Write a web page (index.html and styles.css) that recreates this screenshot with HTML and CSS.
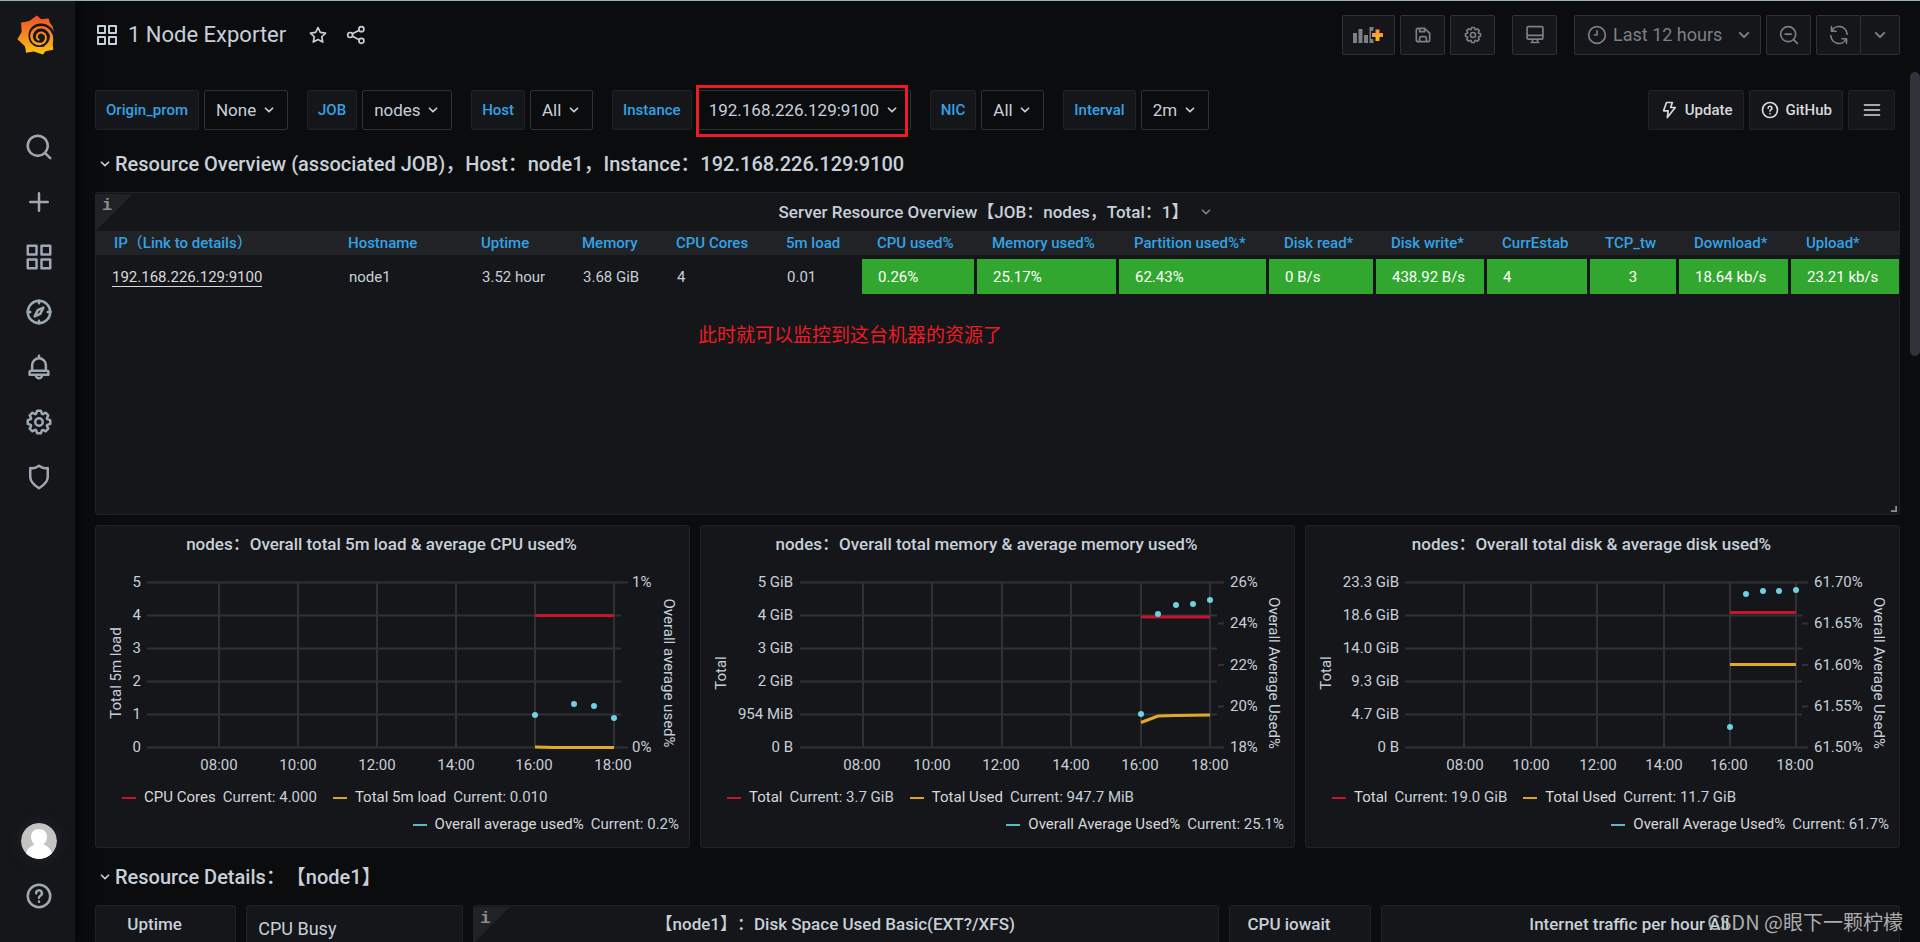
FILE: index.html
```html
<!DOCTYPE html>
<html lang="en">
<head>
<meta charset="utf-8">
<title>1 Node Exporter - Grafana</title>
<link rel="stylesheet" href="styles.css">
</head>
<body>
<svg class="defs" aria-hidden="true">
  <defs>
    <symbol id="i-apps" viewBox="0 0 24 24"><path fill="currentColor" d="M10,13H3a1,1,0,0,0-1,1v7a1,1,0,0,0,1,1h7a1,1,0,0,0,1-1V14A1,1,0,0,0,10,13ZM9,20H4V15H9ZM21,2H14a1,1,0,0,0-1,1v7a1,1,0,0,0,1,1h7a1,1,0,0,0,1-1V3A1,1,0,0,0,21,2ZM20,9H15V4h5Zm1,4H14a1,1,0,0,0-1,1v7a1,1,0,0,0,1,1h7a1,1,0,0,0,1-1V14A1,1,0,0,0,21,13Zm-1,7H15V15h5ZM10,2H3A1,1,0,0,0,2,3v7a1,1,0,0,0,1,1h7a1,1,0,0,0,1-1V3A1,1,0,0,0,10,2ZM9,9H4V4H9Z"/></symbol>
    <symbol id="i-search" viewBox="0 0 24 24"><path fill="currentColor" d="M21.71,20.29,18,16.61A9,9,0,1,0,16.61,18l3.68,3.68a1,1,0,0,0,1.42,0A1,1,0,0,0,21.71,20.29ZM11,18a7,7,0,1,1,7-7A7,7,0,0,1,11,18Z"/></symbol>
    <symbol id="i-cog" viewBox="0 0 24 24"><path fill="currentColor" d="M21.32,9.55l-1.89-.63.89-1.78A1,1,0,0,0,20.13,6L18,3.87a1,1,0,0,0-1.15-.19l-1.78.89-.63-1.89A1,1,0,0,0,13.5,2h-3a1,1,0,0,0-.95.68L8.92,4.57,7.14,3.68A1,1,0,0,0,6,3.87L3.87,6a1,1,0,0,0-.19,1.15l.89,1.78-1.89.63A1,1,0,0,0,2,10.5v3a1,1,0,0,0,.68.95l1.89.63-.89,1.78A1,1,0,0,0,3.87,18L6,20.13a1,1,0,0,0,1.15.19l1.78-.89.63,1.89a1,1,0,0,0,.95.68h3a1,1,0,0,0,.95-.68l.63-1.89,1.78.89A1,1,0,0,0,18,20.13L20.13,18a1,1,0,0,0,.19-1.15l-.89-1.78,1.89-.63A1,1,0,0,0,22,13.5v-3A1,1,0,0,0,21.32,9.55ZM20,12.78l-1.2.4A2,2,0,0,0,17.64,16l.57,1.14-1.1,1.1L16,17.64a2,2,0,0,0-2.79,1.16l-.4,1.2H11.22l-.4-1.2A2,2,0,0,0,8,17.64l-1.14.57-1.1-1.1L6.36,16A2,2,0,0,0,5.2,13.18L4,12.78V11.22l1.2-.4A2,2,0,0,0,6.36,8L5.79,6.89l1.1-1.1L8,6.36A2,2,0,0,0,10.82,5.2l.4-1.2h1.56l.4,1.2A2,2,0,0,0,16,6.36l1.14-.57,1.1,1.1L17.64,8a2,2,0,0,0,1.16,2.79l1.2.4ZM12,8a4,4,0,1,0,4,4A4,4,0,0,0,12,8Zm0,6a2,2,0,1,1,2-2A2,2,0,0,1,12,14Z"/></symbol>
    <symbol id="i-save" viewBox="0 0 24 24"><path fill="currentColor" d="M20.71,9.29l-6-6a1,1,0,0,0-.32-.21A1.09,1.09,0,0,0,14,3H6A3,3,0,0,0,3,6V18a3,3,0,0,0,3,3H18a3,3,0,0,0,3-3V10A1,1,0,0,0,20.71,9.29ZM9,5h4V7H9Zm6,14H9V16a1,1,0,0,1,1-1h4a1,1,0,0,1,1,1Zm4-1a1,1,0,0,1-1,1H17V16a3,3,0,0,0-3-3H10a3,3,0,0,0-3,3v3H6a1,1,0,0,1-1-1V6A1,1,0,0,1,6,5H7V8A1,1,0,0,0,8,9h6a1,1,0,0,0,1-1V6.41l4,4Z"/></symbol>
    <symbol id="i-down" viewBox="0 0 24 24"><path fill="currentColor" d="M17,9.17a1,1,0,0,0-1.41,0L12,12.71,8.46,9.17a1,1,0,0,0-1.41,0,1,1,0,0,0,0,1.42l4.24,4.24a1,1,0,0,0,1.42,0L17,10.59A1,1,0,0,0,17,9.17Z"/></symbol>
    <symbol id="i-help" viewBox="0 0 24 24"><g fill="none" stroke="currentColor" stroke-width="2" stroke-linecap="round"><circle cx="12" cy="12" r="9"/><path d="M9.7 9.8a2.3 2.3 0 1 1 3.4 2c-.8.4-1.1.8-1.1 1.5"/><path d="M12 16.4v.1"/></g></symbol>
  </defs>
</svg>
<div class="app">
  <nav class="sidebar" aria-label="Main menu">
    <a class="logo" href="#" aria-label="Grafana">
      <svg viewBox="50 44 110 118" width="37" height="40">
        <defs><linearGradient id="flame" gradientUnits="userSpaceOnUse" x1="105" y1="161" x2="105" y2="45"><stop offset="0" stop-color="#fcc70b"/><stop offset=".35" stop-color="#f79a1c"/><stop offset="1" stop-color="#f04e28"/></linearGradient></defs>
        <path fill="url(#flame)" d="M109 45L122 56Q134 55 144 54L148 67Q158 76 159 89Q160 98 158 105L156 129L158 147Q145 149 135 151L127 161Q113 156 100 152L77 156Q76 144 73 136L51 116Q58 104 64 94L62 66Q77 64 88 61Z"/>
        <path fill="#141619" d="M162 98C154 78 138 69 120 69C98 69 84 86 84 105C84 126 100 139 119 139C133 139 143 131 148 122L157 125L164 116Z"/>
        <path fill="none" stroke="url(#flame)" stroke-width="8" stroke-linecap="round" d="M153 123C157 100 142 80 121 80C105 80 93 92 93 107C94 121 104 130 118 130"/>
        <path fill="url(#flame)" d="M148 104L157 106L156 130L140 138L130 136C142 130 148 118 148 104Z"/>
        <path fill="none" stroke="url(#flame)" stroke-width="6" stroke-linecap="round" d="M118 130C130 129 137 120 136 108C134 97 122 93 114 98C107 103 107 113 114 117"/>
      </svg>
    </a>
    <ul class="menu">
      <li><a href="#" aria-label="Search"><svg class="ic30"><use href="#i-search"/></svg></a></li>
      <li><a href="#" aria-label="Create"><svg class="ic30" viewBox="0 0 24 24"><path class="ln" d="M12 5v14M5 12h14"/></svg></a></li>
      <li><a href="#" aria-label="Dashboards"><svg class="ic30"><use href="#i-apps"/></svg></a></li>
      <li><a href="#" aria-label="Explore"><svg class="ic30" viewBox="0 0 24 24"><circle class="ln" cx="12" cy="12" r="9"/><path class="ln" d="M12 3v2M12 19v2M3 12h2M19 12h2"/><path class="ln" d="M15.500 8.500L11 10.500L8.500 15.500L13 13.500Z"/></svg></a></li>
      <li><a href="#" aria-label="Alerting"><svg class="ic30" viewBox="0 0 24 24"><path class="ln" d="M12 3v2M6.500 15V10.500a5.500 5.500 0 0 1 11 0V15M5.500 15h13a1 1 0 0 1 1 1v2.200h-15V16a1 1 0 0 1 1-1ZM9.500 19q.6 2 2.500 2t2.500-2"/></svg></a></li>
      <li><a href="#" aria-label="Configuration"><svg class="ic30"><use href="#i-cog"/></svg></a></li>
      <li><a href="#" aria-label="Server admin"><svg class="ic30" viewBox="0 0 24 24"><path class="ln" d="M12 3C9.800 4.700 7.500 5.300 5 4.800V12c0 4 3 6.500 7 9c4-2.500 7-5 7-9V4.800C16.500 5.300 14.200 4.700 12 3Z"/></svg></a></li>
    </ul>
    <ul class="menu menu-bottom">
      <li><a href="#" aria-label="Profile"><svg class="avatar" viewBox="0 0 36 36"><circle cx="18" cy="18" r="18" fill="#c4c4c4"/><path fill="#fff" d="M18 6c5 0 8 3.500 8 8c0 3-1.500 6-3.500 7.500C27 23 30 26 31 30.500A18 18 0 0 1 5 30.500C6 26 9 23 13.500 21.500C11.500 20 10 17 10 14c0-4.500 3-8 8-8Z"/></svg></a></li>
      <li><a href="#" aria-label="Help"><svg class="ic30"><use href="#i-help"/></svg></a></li>
    </ul>
  </nav>

  <main class="main">
    <header class="toolbar">
      <svg class="ic24"><use href="#i-apps"/></svg>
      <h1>1 Node Exporter</h1>
      <button class="plain" aria-label="Mark as favorite"><svg class="ic20" viewBox="0 0 24 24"><path class="ln" d="M12 3l2.800 5.800l6.300.9l-4.600 4.400l1.200 6.400L12 17.400L6.300 20.500l1.200-6.400L2.900 9.700l6.300-.9Z"/></svg></button>
      <button class="plain" aria-label="Share dashboard"><svg class="ic20" viewBox="0 0 24 24"><circle class="ln" cx="5" cy="12" r="3"/><circle class="ln" cx="18.500" cy="5" r="3"/><circle class="ln" cx="18.500" cy="19" r="3"/><path class="ln" d="M7.700 10.600L15.800 6.400M7.700 13.400L15.800 17.600"/></svg></button>
      <div class="actions">
        <button class="tbtn tbtn-add" aria-label="Add panel"><svg width="32" height="20" viewBox="0 0 32 20"><path fill="#7b8087" d="M0 8h4v10H0ZM5.500 4h4v14h-4ZM11 10h4v8h-4ZM16.500 2h4v16h-4Z"/><path stroke="#141619" stroke-width="8" d="M24.500 4v12M18 10h12"/><path stroke="#ff9830" stroke-width="4" d="M24.500 4.500v6M19 10h11"/><path stroke="#fbb315" stroke-width="4" d="M24.500 10v6"/></svg></button>
        <button class="tbtn" aria-label="Save dashboard"><svg class="ic20"><use href="#i-save"/></svg></button>
        <button class="tbtn" aria-label="Dashboard settings"><svg class="ic20"><use href="#i-cog"/></svg></button>
        <button class="tbtn tbtn-view" aria-label="Cycle view mode"><svg class="ic20" viewBox="0 0 24 24"><path class="ln" d="M4 2h16a1.500 1.500 0 0 1 1.500 1.500v12A1.500 1.500 0 0 1 20 17H4a1.500 1.500 0 0 1-1.500-1.500v-12A1.500 1.500 0 0 1 4 2ZM2.500 12.500h19M9 17v3.500M15 17v3.500M7.500 21h9"/></svg></button>
        <button class="tbtn tbtn-time"><svg class="ic20" viewBox="0 0 24 24"><circle class="ln" cx="12" cy="12" r="10"/><path class="ln" d="M12 7v5H9"/></svg><span>Last 12 hours</span><svg class="ic24 end"><use href="#i-down"/></svg></button>
        <button class="tbtn" aria-label="Zoom out"><svg class="ic20" viewBox="0 0 24 24"><circle class="ln" cx="11" cy="11" r="9"/><path class="ln" d="M7.500 11h7M17.500 17.500L22 22"/></svg></button>
        <div class="split">
          <button class="tbtn" aria-label="Refresh"><svg class="ic20" viewBox="0 0 24 24"><path class="ln" d="M3 2v5.500h5.500M3.200 7.500A9.700 9.700 0 0 1 21.700 11M21 22v-5.500h-5.500M20.800 16.500A9.700 9.700 0 0 1 2.300 13"/></svg></button>
          <button class="tbtn tbtn-interval" aria-label="Refresh interval"><svg class="ic24"><use href="#i-down"/></svg></button>
        </div>
      </div>
    </header>

    <section class="vars" aria-label="Variables">
      <div class="var"><label for="v1">Origin_prom</label><span class="pick"><select id="v1"><option>None</option></select><svg class="ic20"><use href="#i-down"/></svg></span></div>
      <div class="var"><label for="v2">JOB</label><span class="pick"><select id="v2"><option>nodes</option></select><svg class="ic20"><use href="#i-down"/></svg></span></div>
      <div class="var"><label for="v3">Host</label><span class="pick"><select id="v3"><option>All</option></select><svg class="ic20"><use href="#i-down"/></svg></span></div>
      <div class="var"><label for="v4">Instance</label><span class="pick marked"><select id="v4"><option>192.168.226.129:9100</option></select><svg class="ic20"><use href="#i-down"/></svg></span></div>
      <div class="var"><label for="v5">NIC</label><span class="pick"><select id="v5"><option>All</option></select><svg class="ic20"><use href="#i-down"/></svg></span></div>
      <div class="var"><label for="v6">Interval</label><span class="pick"><select id="v6"><option>2m</option></select><svg class="ic20"><use href="#i-down"/></svg></span></div>
      <div class="links">
        <a href="#"><svg class="ic20" viewBox="0 0 24 24"><path class="ln" d="M9 3h7l-2 6h5.500L10 21l1-8H5.500Z"/></svg>Update</a>
        <a href="#"><svg class="ic20"><use href="#i-help"/></svg>GitHub</a>
        <a href="#" aria-label="Dashboards"><svg class="ic20" viewBox="0 0 24 24"><path class="ln" d="M3 6h18M3 12h18M3 18h18"/></svg></a>
      </div>
    </section>

    <h2 class="row-title"><svg class="ic20"><use href="#i-down"/></svg>Resource Overview (associated JOB)，Host：node1，Instance：192.168.226.129:9100</h2>

    <div class="grid">
      <section class="panel span24">
        <span class="info" aria-hidden="true">i</span>
        <h3>Server Resource Overview【JOB：nodes，Total：1】<svg class="ic20"><use href="#i-down"/></svg></h3>
        <table>
          <colgroup><col class="w237"><col class="w133"><col class="w101"><col class="w94"><col class="w110"><col class="w91"><col class="w115"><col class="w142"><col class="w150"><col class="w107"><col class="w111"><col class="w103"><col class="w89"><col class="w112"><col class="w109"></colgroup>
          <thead><tr><th>IP（Link to details）</th><th>Hostname</th><th>Uptime</th><th>Memory</th><th>CPU Cores</th><th>5m load</th><th>CPU used%</th><th>Memory used%</th><th>Partition used%*</th><th>Disk read*</th><th>Disk write*</th><th>CurrEstab</th><th>TCP_tw</th><th>Download*</th><th>Upload*</th></tr></thead>
          <tbody><tr><td><a href="#">192.168.226.129:9100</a></td><td>node1</td><td>3.52 hour</td><td>3.68 GiB</td><td>4</td><td>0.01</td><td class="ok">0.26%</td><td class="ok">25.17%</td><td class="ok">62.43%</td><td class="ok">0 B/s</td><td class="ok">438.92 B/s</td><td class="ok">4</td><td class="ok mid">3</td><td class="ok">18.64 kb/s</td><td class="ok">23.21 kb/s</td></tr></tbody>
        </table>
        <p class="note">此时就可以监控到这台机器的资源了</p>
        <svg class="grip" viewBox="0 0 8 8"><path d="M7 1v6H1" fill="none" stroke="#8e8e8e" stroke-width="2"/></svg>
      </section>

      <section class="panel span8">
        <h3 class="pad">nodes：Overall total 5m load &amp; average CPU used%</h3>
        <svg class="chart" viewBox="1 39 593 220">
          <path class="gl" d="M52 57.500H533M52 90.500H526M52 123.500H526M52 156.500H526M52 189.500H526M52 222.500H533M124 57V223M203 57V223M282 57V223M361 57V223M440 57V223M519 57V223"/>
          <g class="e"><text x="46" y="62">5</text><text x="46" y="95">4</text><text x="46" y="128">3</text><text x="46" y="161">2</text><text x="46" y="194">1</text><text x="46" y="227">0</text></g>
          <g><text x="537" y="62">1%</text><text x="537" y="227">0%</text></g>
          <g class="m"><text x="124" y="245">08:00</text><text x="203" y="245">10:00</text><text x="282" y="245">12:00</text><text x="361" y="245">14:00</text><text x="439" y="245">16:00</text><text x="518" y="245">18:00</text><text transform="translate(26 148) rotate(-90)">Total 5m load</text><text transform="translate(569 148) rotate(90)">Overall average used%</text></g>
          <path class="s red" d="M440 90.500H519"/><path class="s yellow" d="M440 222L460 222.500H519"/>
          <g class="dots"><circle cx="440" cy="190" r="3"/><circle cx="479" cy="179" r="3"/><circle cx="499" cy="181" r="3"/><circle cx="519" cy="193" r="3"/></g>
        </svg>
        <ul class="legend"><li class="red">CPU Cores<span>Current: 4.000</span></li><li class="yellow">Total 5m load<span>Current: 0.010</span></li><li class="cyan">Overall average used%<span>Current: 0.2%</span></li></ul>
      </section>

      <section class="panel span8">
        <h3 class="pad">nodes：Overall total memory &amp; average memory used%</h3>
        <svg class="chart" viewBox="1 39 593 220">
          <path class="gl" d="M100 57.500H524M100 90.500H517M100 123.500H517M100 156.500H517M100 189.500H517M100 222.500H524M163 57V223M232 57V223M302 57V223M371 57V223M441 57V223M510 57V223M518 98.500H524M518 140H524M518 181.500H524"/>
          <g class="e"><text x="93" y="62">5 GiB</text><text x="93" y="95">4 GiB</text><text x="93" y="128">3 GiB</text><text x="93" y="161">2 GiB</text><text x="93" y="194">954 MiB</text><text x="93" y="227">0 B</text></g>
          <g><text x="530" y="62">26%</text><text x="530" y="103">24%</text><text x="530" y="145">22%</text><text x="530" y="186">20%</text><text x="530" y="227">18%</text></g>
          <g class="m"><text x="162" y="245">08:00</text><text x="232" y="245">10:00</text><text x="301" y="245">12:00</text><text x="371" y="245">14:00</text><text x="440" y="245">16:00</text><text x="510" y="245">18:00</text><text transform="translate(26 148) rotate(-90)">Total</text><text transform="translate(569 148) rotate(90)">Overall Average Used%</text></g>
          <path class="s red" d="M441 92H510"/><path class="s yellow" d="M441 197.500L458 191L475 190.500L510 190"/>
          <g class="dots"><circle cx="441" cy="189" r="3"/><circle cx="458" cy="89" r="3"/><circle cx="476" cy="80" r="3"/><circle cx="493" cy="79" r="3"/><circle cx="510" cy="75" r="3"/></g>
        </svg>
        <ul class="legend"><li class="red">Total<span>Current: 3.7 GiB</span></li><li class="yellow">Total Used<span>Current: 947.7 MiB</span></li><li class="cyan">Overall Average Used%<span>Current: 25.1%</span></li></ul>
      </section>

      <section class="panel span8">
        <h3 class="pad">nodes：Overall total disk &amp; average disk used%</h3>
        <svg class="chart" viewBox="1 39 593 220">
          <path class="gl" d="M100 57.500H503M100 90.500H497M100 123.500H497M100 156.500H497M100 189.500H497M100 222.500H503M159 57V223M226 57V223M292 57V223M359 57V223M425 57V223M491 57V223M497 98.500H503M497 140H503M497 181.500H503"/>
          <g class="e"><text x="94" y="62">23.3 GiB</text><text x="94" y="95">18.6 GiB</text><text x="94" y="128">14.0 GiB</text><text x="94" y="161">9.3 GiB</text><text x="94" y="194">4.7 GiB</text><text x="94" y="227">0 B</text></g>
          <g><text x="509" y="62">61.70%</text><text x="509" y="103">61.65%</text><text x="509" y="145">61.60%</text><text x="509" y="186">61.55%</text><text x="509" y="227">61.50%</text></g>
          <g class="m"><text x="160" y="245">08:00</text><text x="226" y="245">10:00</text><text x="293" y="245">12:00</text><text x="359" y="245">14:00</text><text x="424" y="245">16:00</text><text x="490" y="245">18:00</text><text transform="translate(26 148) rotate(-90)">Total</text><text transform="translate(569 148) rotate(90)">Overall Average Used%</text></g>
          <path class="s red" d="M425 87.500H491"/><path class="s yellow" d="M425 139.500H491"/>
          <g class="dots"><circle cx="425" cy="202" r="3"/><circle cx="441" cy="69" r="3"/><circle cx="458" cy="66" r="3"/><circle cx="474" cy="66" r="3"/><circle cx="491" cy="65" r="3"/></g>
        </svg>
        <ul class="legend"><li class="red">Total<span>Current: 19.0 GiB</span></li><li class="yellow">Total Used<span>Current: 11.7 GiB</span></li><li class="cyan">Overall Average Used%<span>Current: 61.7%</span></li></ul>
      </section>
    </div>

    <h2 class="row-title"><svg class="ic20"><use href="#i-down"/></svg>Resource Details：【node1】</h2>

    <div class="grid">
      <section class="panel span2"><h3 class="pad">Uptime</h3></section>
      <section class="panel span3"><h3 class="gauge-title">CPU Busy</h3></section>
      <section class="panel span10"><span class="info" aria-hidden="true">i</span><h3 class="pad">【node1】：Disk Space Used Basic(EXT?/XFS)</h3></section>
      <section class="panel span2"><h3 class="pad">CPU iowait</h3></section>
      <section class="panel span7"><h3 class="pad">Internet traffic per hour All</h3></section>
    </div>
  </main>
  <div class="scroll-thumb"></div>
  <div class="watermark">CSDN @眼下一颗柠檬</div>
</div>
</body>
</html>
```
FILE: styles.css
```css
* { box-sizing: border-box; }

body {
  margin: 0;
  background: #0b0c0e;
  color: #c7d0d9;
  font: 15px/20px Roboto, "Noto Sans CJK SC", sans-serif;
  text-spacing-trim: space-all;
}

h1, h2, h3, p, ul { margin: 0; padding: 0; font-weight: 400; }
ul { list-style: none; }
a { color: inherit; text-decoration: none; }
svg { display: block; flex: none; }
button, select { font: inherit; color: inherit; margin: 0; }

.defs { position: absolute; width: 0; height: 0; }
.ic20 { width: 20px; height: 20px; }
.ic24 { width: 24px; height: 24px; }
.ic30 { width: 30px; height: 30px; }
.ln { fill: none; stroke: currentColor; stroke-width: 2; stroke-linejoin: round; stroke-linecap: round; }

.app {
  position: relative;
  display: flex;
  height: 100vh;
  overflow: hidden;
  border-top: 1px solid #9bb0b3;
}

/* Side menu */
.sidebar {
  flex: 0 0 75px;
  display: flex;
  flex-direction: column;
  background: #141619;
  color: #9fa7b3;
  box-shadow: 0 0 20px #000;
  padding: 14px 0 19px;
}
.logo { padding-left: 17px; margin-bottom: 64px; }
.menu a { display: flex; align-items: center; justify-content: center; height: 55px; padding-left: 3px; }
.menu-bottom { margin-top: auto; }
.avatar { width: 36px; height: 36px; border-radius: 50%; box-shadow: 0 0 14px #24262b; }

.main { flex: 1; min-width: 0; padding: 14px 20px 0; }

/* Dashboard toolbar */
.toolbar { display: flex; align-items: center; height: 40px; margin-bottom: 35px; }
.toolbar h1 { font-size: 22px; line-height: 28px; margin: 0 22px 0 9px; }
.plain { background: none; border: 0; padding: 0; margin-right: 18px; }
.actions { display: flex; gap: 5px; margin-left: auto; color: #7b8087; font-size: 18px; }
.tbtn {
  display: flex;
  align-items: center;
  justify-content: center;
  width: 45px;
  height: 40px;
  padding: 0;
  background: #141619;
  border: 1px solid #2c3235;
  border-radius: 2px;
}
.tbtn-add { width: 53px; }
.tbtn-view { margin: 0 12px; }
.tbtn-time { width: 187px; padding: 0 4px 0 12px; justify-content: flex-start; gap: 6px; }
.tbtn-time .end { margin-left: auto; }
.split { display: flex; }
.split .tbtn-interval { width: 40px; margin-left: -1px; }

/* Variables */
.vars { display: flex; align-items: center; gap: 19px; padding-right: 5px; margin-bottom: 5px; }
.var { display: flex; gap: 5px; }
.var label, .links a {
  display: flex;
  align-items: center;
  height: 40px;
  padding: 0 10px;
  background: #141619;
  border: 1px solid #202226;
  border-radius: 2px;
  font-weight: 500;
}
.var label { color: #33a2e5; }
.pick { position: relative; display: flex; }
.pick select {
  appearance: none;
  height: 40px;
  padding: 0 30px 0 11px;
  background: #0b0c0e;
  border: 1px solid #2c3235;
  border-radius: 2px;
  font-size: 17px;
}
.pick svg { position: absolute; right: 9px; top: 10px; pointer-events: none; }
.marked::after { content: ""; position: absolute; inset: -5px 3px -7px -1px; border: 3px solid #ed1c24; pointer-events: none; }
.links { display: flex; gap: 5px; margin-left: auto; color: #d8d9da; }
.links a { justify-content: center; gap: 6px; min-width: 47px; }

/* Rows and panels */
.row-title { display: flex; align-items: center; height: 57px; font-size: 20px; font-weight: 500; }
.grid { display: grid; grid-template-columns: repeat(24, minmax(0, 1fr)); gap: 10px; }
.panel {
  position: relative;
  height: 323px;
  background: #141619;
  border: 1px solid #202226;
  border-radius: 3px;
}
.span2 { grid-column: span 2; }
.span3 { grid-column: span 3; }
.span7 { grid-column: span 7; }
.span8 { grid-column: span 8; }
.span10 { grid-column: span 10; }
.span24 { grid-column: span 24; }
.panel h3 {
  display: flex;
  align-items: center;
  justify-content: center;
  height: 38px;
  font-size: 17px;
  font-weight: 500;
  white-space: nowrap;
}
.panel h3 svg { margin-left: 8px; color: #7b8087; }
.panel .pad { height: 36px; margin-bottom: 2px; padding-right: 22px; }
.panel .gauge-title { justify-content: flex-start; align-items: flex-end; height: 33px; padding-left: 11px; font-size: 18px; font-weight: 400; }

.info {
  position: absolute;
  left: 0;
  top: 1px;
  width: 36px;
  height: 36px;
  padding-left: 6px;
  background: linear-gradient(135deg, #202226 50%, transparent 50%);
  color: #8e8e8e;
  font: bold 17px/23px "Liberation Mono", monospace;
}

table { width: 100%; table-layout: fixed; border-collapse: separate; border-spacing: 0; }
th { height: 24px; padding: 0 0 0 18px; background: #202226; color: #33a2e5; font-weight: 500; text-align: left; white-space: nowrap; }
th + th { padding-left: 15px; }
td { height: 43px; padding: 0 0 0 16px; border: solid #141619; border-width: 4px 3px 4px 0; white-space: nowrap; }
td:last-child { border-right-width: 1px; }
td a { border-bottom: 1px solid #d8d9da; color: #d8d9da; }
.ok { background: #32a72f; color: #fff; }
.mid { padding: 0; text-align: center; }
.w237 { width: 237px; }
.w133 { width: 133px; }
.w101 { width: 101px; }
.w94 { width: 94px; }
.w110 { width: 110px; }
.w91 { width: 91px; }
.w115 { width: 115px; }
.w142 { width: 142px; }
.w150 { width: 150px; }
.w107 { width: 107px; }
.w111 { width: 111px; }
.w103 { width: 103px; }
.w89 { width: 89px; }
.w112 { width: 112px; }
.w109 { width: 109px; }

.note { position: absolute; left: 602px; top: 127px; color: #ed1c24; font: 19px/28px "Noto Sans CJK SC", sans-serif; }
.grip { position: absolute; right: 2px; bottom: 2px; width: 7px; height: 7px; }

/* Graphs */
.chart { width: 100%; height: auto; }
.chart text { fill: #c7d0d9; font-size: 15px; }
.chart .e { text-anchor: end; }
.chart .m { text-anchor: middle; }
.gl { stroke: #303135; stroke-width: 2; fill: none; }
.s { fill: none; stroke-width: 3; }
.s.red { stroke: #c4162a; }
.s.yellow { stroke: #e0a92e; }
.dots { fill: #6ed0e0; }

.legend { display: flex; flex-wrap: wrap; padding: 0 10px 0 26px; line-height: 27px; }
.legend li { display: flex; align-items: center; margin-right: 16px; color: #d8d9da; }
.legend li::before { content: ""; width: 14px; height: 2px; margin-right: 8px; background: currentColor; }
.legend span { margin-left: 7px; color: #c7d0d9; }
.legend .yellow { margin-right: 60px; }
.legend .cyan { margin: 0 0 0 auto; }
.legend .red::before { background: #c4162a; }
.legend .yellow::before { background: #d9a52c; }
.legend .cyan::before { background: #5cb8c6; }

.scroll-thumb { position: absolute; right: 0; top: 71px; width: 10px; height: 284px; border-radius: 5px; background: #30323c; }
.watermark { position: absolute; right: 17px; bottom: 5px; color: #bdbdbd; font: 20px/30px "Noto Sans CJK SC", sans-serif; opacity: .9; }
```
